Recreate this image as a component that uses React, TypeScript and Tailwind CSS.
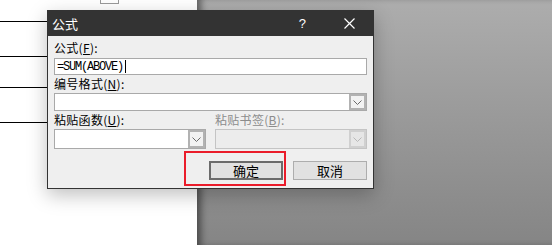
import React from "react";

const cjk = { fontFamily: '"Noto Sans CJK SC", "Noto Sans", sans-serif' };

// * little chevron used by the combo boxes
function Chevron({ color }: { color: string }) {
  return (
    <svg width="9" height="5" viewBox="0 0 9 5" fill="none">
      <path d="M0.5 0.5 L4.5 4.5 L8.5 0.5" stroke={color} strokeWidth="1" />
    </svg>
  );
}

function Combo({ width, height, disabled }: { width: string; height: string; disabled?: boolean }) {
  return (
    <div
      className={`flex ${width} ${height} border ${
        disabled ? "border-[#c4c4c4] bg-[#ececec]" : "border-[#a9a9a9] bg-white"
      }`}
    >
      <div className="flex-1" />
      <div
        className={`flex w-[17px] items-center justify-center border-2 ${
          disabled ? "border-[#d0d0d0] bg-[#e6e6e6]" : "border-[#b2b2b2] bg-[#f2f2f2]"
        }`}
      >
        <Chevron color={disabled ? "#b8b8b8" : "#6a6a6a"} />
      </div>
    </div>
  );
}

function Label({ text, keyChar, disabled }: { text: string; keyChar: string; disabled?: boolean }) {
  return (
    <div
      className={`flex h-[18px] items-center text-[12px] leading-none tracking-[0.3px] ${
        disabled ? "text-[#8c8c8c]" : "text-black"
      }`}
      style={cjk}
    >
      {text}(<u>{keyChar}</u>):
    </div>
  );
}

export default function App(): JSX.Element {
  return (
    <div className="relative flex h-[245px] w-[552px] overflow-hidden">
      {/* document page */}
      <div className="relative w-[197px] bg-white">
        <div className="absolute left-[100px] top-0 h-[4px] w-[19px] border-b border-l border-r border-[#9a9a9a]" />
        <div className="flex flex-col pt-[21px]">
          <div className="h-px w-full bg-black" />
          <div className="mt-[34px] h-px w-full bg-black" />
          <div className="mt-[30px] h-px w-full bg-black" />
          <div className="mt-[34px] h-px w-full bg-black" />
        </div>
      </div>
      {/* grey workspace */}
      <div className="flex-1 bg-gradient-to-b from-[#adadad] to-[#858585] shadow-[inset_7px_0_7px_-3px_rgba(0,0,0,0.45)]" />

      {/* dialog */}
      <div className="absolute left-[47px] top-[10px] flex w-[327px] flex-col border border-[#333333] bg-[#efefef] shadow-[0_6px_18px_rgba(0,0,0,0.25)]">
        <div className="flex h-[25px] items-center bg-[#333333] pl-[4px] text-white" style={cjk}>
          <span className="text-[13px]">公式</span>
          <span className="ml-auto mr-[38px] text-[13px] leading-none" style={{ fontFamily: '"Liberation Sans", sans-serif' }}>
            ?
          </span>
          <svg className="mr-[18px]" width="11" height="11" viewBox="0 0 11 11">
            <path d="M0.5 0.5 L10.5 10.5 M10.5 0.5 L0.5 10.5" stroke="#ffffff" strokeWidth="1.2" />
          </svg>
        </div>

        <div className="flex flex-col px-[6px] pt-[3px] pb-[8px]">
          <Label text="公式" keyChar="F" />
          <div className="mt-[1px] flex h-[17px] items-center border border-[#a9a9a9] bg-white pl-[2px]">
            <span
              className="text-[12px] leading-none tracking-[-1.2px] text-black"
              style={{ fontFamily: '"Liberation Mono", monospace' }}
            >
              =SUM(ABOVE)
            </span>
            <span className="ml-[2px] h-[13px] w-px bg-black" />
          </div>

          <Label text="编号格式" keyChar="N" />
          <Combo width="w-full" height="h-[18px]" />

          <div className="flex gap-[9px]">
            <div className="flex flex-col">
              <Label text="粘贴函数" keyChar="U" />
              <Combo width="w-[152px]" height="h-[20px]" />
            </div>
            <div className="flex flex-col">
              <Label text="粘贴书签" keyChar="B" disabled />
              <Combo width="w-[152px]" height="h-[20px]" disabled />
            </div>
          </div>

          <div className="mt-[12px] flex justify-end gap-[10px]" style={cjk}>
            <button className="flex h-[19px] w-[74px] items-center justify-center border-2 border-[#6b6b6b] bg-[#e1e1e1] text-[13px] leading-none text-black">
              确定
            </button>
            <button className="flex h-[19px] w-[74px] items-center justify-center border border-[#adadad] bg-[#e1e1e1] text-[13px] leading-none text-black">
              取消
            </button>
          </div>
        </div>

        {/* red highlight around the OK button */}
        <div className="absolute left-[136px] top-[140px] h-[35px] w-[102px] border-2 border-[#ea1c2a]" />
      </div>
    </div>
  );
}
